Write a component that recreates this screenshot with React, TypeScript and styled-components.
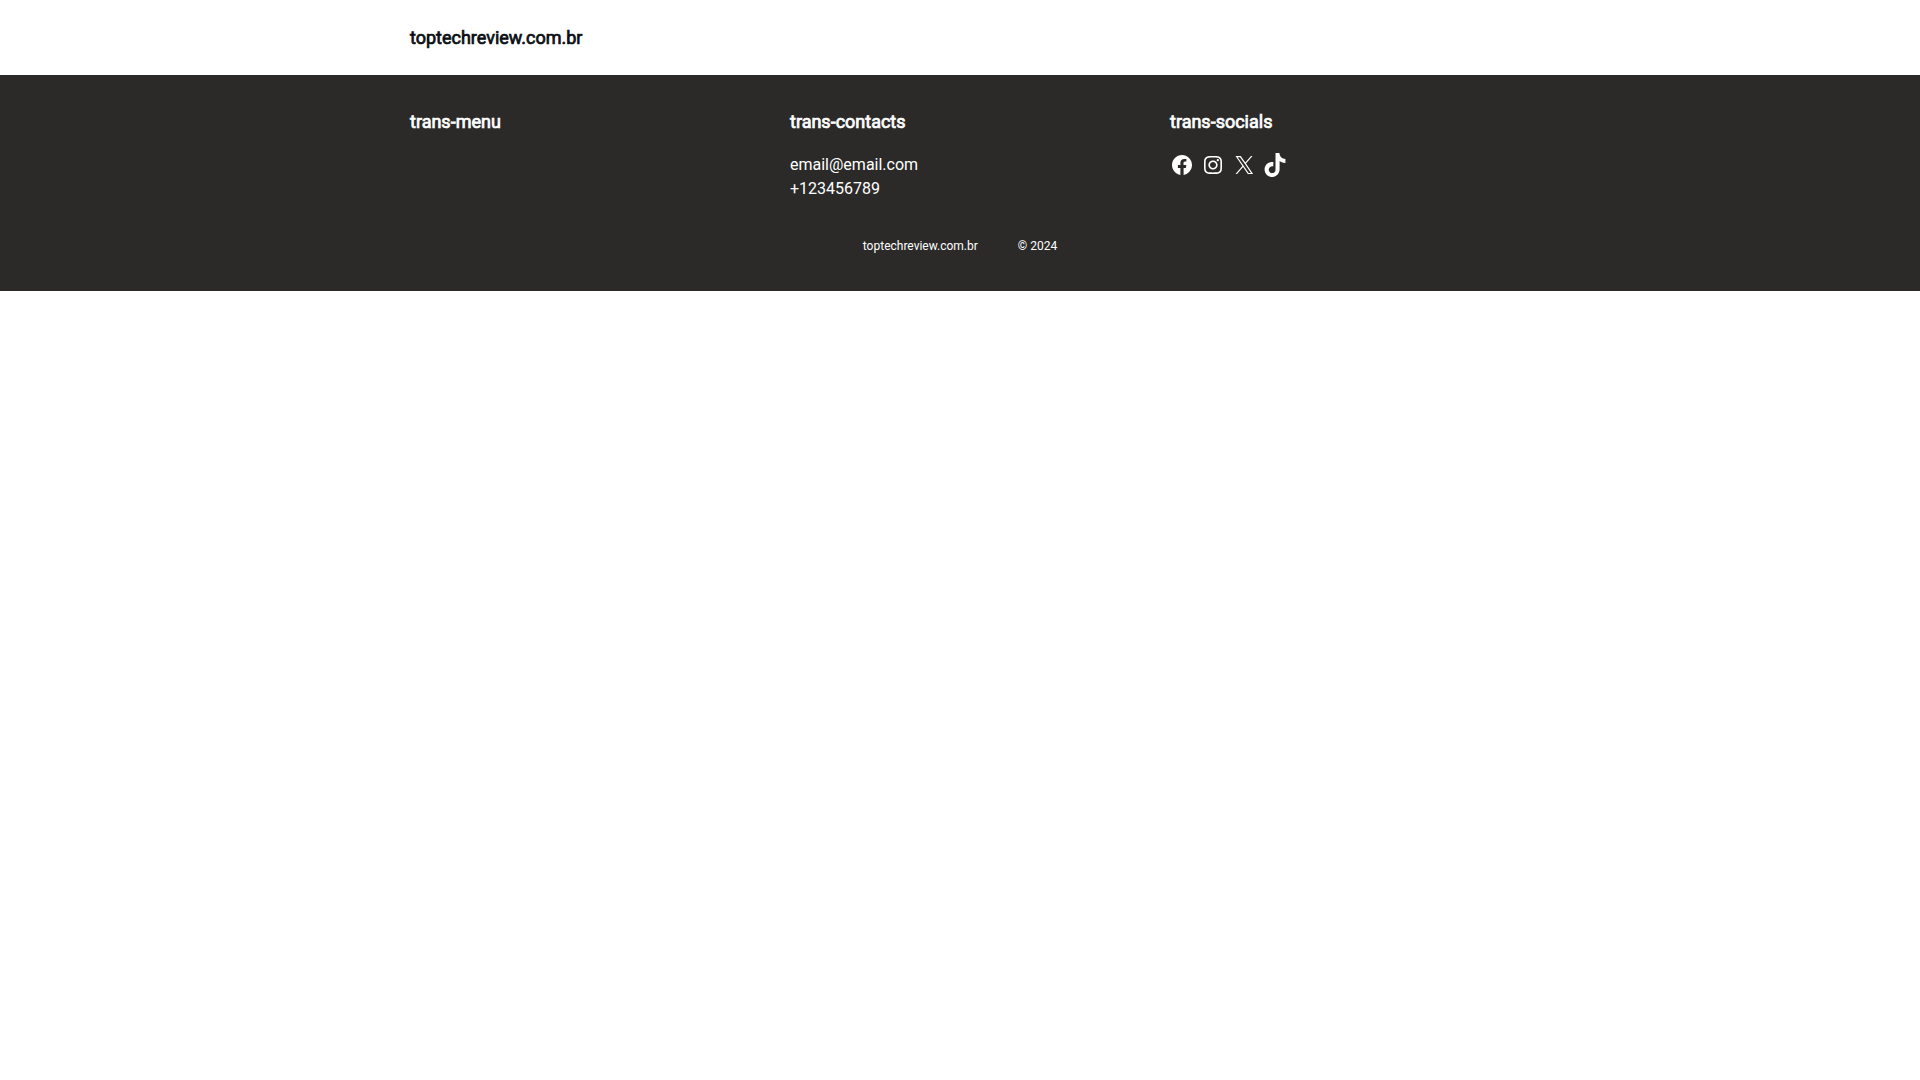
import React from "react";
import styled, { createGlobalStyle, css } from "styled-components";

const GlobalStyle = createGlobalStyle`
  *, *::before, *::after { box-sizing: border-box; }
  body { margin: 0; background: #fff; color: #0b0f14; font-family: Roboto, sans-serif; font-size: 16px; line-height: 24px; }
`;

const heading = css`
  font-size: 18px;
  font-weight: 400;
  -webkit-text-stroke: 0.04em currentColor;
`;

const Container = styled.div`
  max-width: 1140px;
  margin: 0 auto;
  padding: 0 20px;
`;

const Header = styled.header`
  padding: 24px 0;
  background: #fff;
`;

const Logo = styled.a`
  ${heading}
  display: block;
  width: fit-content;
  color: #0b0f14;
  line-height: 27px;
  text-decoration: none;
`;

const Footer = styled.footer`
  padding: 32px 0 36px;
  background: #2b2a29;
  color: #fff;
`;

const Columns = styled.div`
  display: grid;
  grid-template-columns: repeat(3, 1fr);
  gap: 40px;
`;

const Title = styled.h2`
  ${heading}
  margin: 0 0 16px;
  line-height: 30px;
`;

const ContactLink = styled.a`
  display: block;
  width: fit-content;
  color: inherit;
  text-decoration: none;
`;

const Socials = styled.div`
  display: flex;
  gap: 7px;
`;

const SocialLink = styled.a`
  display: block;
  width: 24px;
  height: 24px;
  color: inherit;

  svg { display: block; fill: currentColor; }
`;

const Legal = styled.div`
  display: flex;
  justify-content: center;
  gap: 40px;
  margin-top: 36px;
  font-size: 12px;
  line-height: 18px;
`;

const socials = [
  {
    name: "Facebook",
    viewBox: "0 0 24 24",
    path: "M12 2C6.5 2 2 6.5 2 12c0 5 3.7 9.1 8.4 9.9v-7H7.9V12h2.5V9.8c0-2.5 1.5-3.9 3.8-3.9 1.1 0 2.2.2 2.2.2v2.5h-1.3c-1.2 0-1.6.8-1.6 1.6V12h2.8l-.4 2.9h-2.3v7C18.3 21.1 22 17 22 12c0-5.5-4.5-10-10-10z",
  },
  {
    name: "Instagram",
    viewBox: "0 0 24 24",
    path: "M12,4.622c2.403,0,2.688,0.009,3.637,0.052c0.877,0.04,1.354,0.187,1.671,0.31c0.42,0.163,0.72,0.358,1.035,0.673 c0.315,0.315,0.51,0.615,0.673,1.035c0.123,0.317,0.27,0.794,0.31,1.671c0.043,0.949,0.052,1.234,0.052,3.637 s-0.009,2.688-0.052,3.637c-0.04,0.877-0.187,1.354-0.31,1.671c-0.163,0.42-0.358,0.72-0.673,1.035 c-0.315,0.315-0.615,0.51-1.035,0.673c-0.317,0.123-0.794,0.27-1.671,0.31c-0.949,0.043-1.233,0.052-3.637,0.052 s-2.688-0.009-3.637-0.052c-0.877-0.04-1.354-0.187-1.671-0.31c-0.42-0.163-0.72-0.358-1.035-0.673 c-0.315-0.315-0.51-0.615-0.673-1.035c-0.123-0.317-0.27-0.794-0.31-1.671C4.631,14.688,4.622,14.403,4.622,12 s0.009-2.688,0.052-3.637c0.04-0.877,0.187-1.354,0.31-1.671c0.163-0.42,0.358-0.72,0.673-1.035 c0.315-0.315,0.615-0.51,1.035-0.673c0.317-0.123,0.794-0.27,1.671-0.31C9.312,4.631,9.597,4.622,12,4.622 M12,3 C9.556,3,9.249,3.01,8.289,3.054C7.331,3.098,6.677,3.25,6.105,3.472C5.513,3.702,5.011,4.01,4.511,4.511 c-0.5,0.5-0.808,1.002-1.038,1.594C3.25,6.677,3.098,7.331,3.054,8.289C3.01,9.249,3,9.556,3,12c0,2.444,0.01,2.751,0.054,3.711 c0.044,0.958,0.196,1.612,0.418,2.185c0.23,0.592,0.538,1.094,1.038,1.594c0.5,0.5,1.002,0.808,1.594,1.038 c0.572,0.222,1.227,0.375,2.185,0.418C9.249,20.99,9.556,21,12,21s2.751-0.01,3.711-0.054c0.958-0.044,1.612-0.196,2.185-0.418 c0.592-0.23,1.094-0.538,1.594-1.038c0.5-0.5,0.808-1.002,1.038-1.594c0.222-0.572,0.375-1.227,0.418-2.185 C20.99,14.751,21,14.444,21,12s-0.01-2.751-0.054-3.711c-0.044-0.958-0.196-1.612-0.418-2.185c-0.23-0.592-0.538-1.094-1.038-1.594 c-0.5-0.5-1.002-0.808-1.594-1.038c-0.572-0.222-1.227-0.375-2.185-0.418C14.751,3.01,14.444,3,12,3L12,3z M12,7.378 c-2.552,0-4.622,2.069-4.622,4.622S9.448,16.622,12,16.622s4.622-2.069,4.622-4.622S14.552,7.378,12,7.378z M12,15 c-1.657,0-3-1.343-3-3s1.343-3,3-3s3,1.343,3,3S13.657,15,12,15z M16.804,6.116c-0.596,0-1.08,0.484-1.08,1.08 s0.484,1.08,1.08,1.08c0.596,0,1.08-0.484,1.08-1.08S17.401,6.116,16.804,6.116z",
  },
  {
    name: "X",
    viewBox: "0 0 24 24",
    path: "M13.982 10.622 20.54 3h-1.554l-5.693 6.618L8.745 3H3.5l6.876 10.007L3.5 21h1.554l6.012-6.989L15.868 21h5.245l-7.131-10.378Zm-2.128 2.474-.697-.997-5.543-7.93H8l4.474 6.4.697.996 5.815 8.318h-2.387l-4.745-6.787Z",
  },
  {
    name: "TikTok",
    viewBox: "0 0 32 32",
    path: "M16.708 0.027c1.745-0.027 3.48-0.011 5.213-0.027 0.105 2.041 0.839 4.12 2.333 5.563 1.491 1.479 3.6 2.156 5.652 2.385v5.369c-1.923-0.063-3.855-0.463-5.6-1.291-0.76-0.344-1.468-0.787-2.161-1.24-0.009 3.896 0.016 7.787-0.025 11.667-0.104 1.864-0.719 3.719-1.803 5.255-1.744 2.557-4.771 4.224-7.88 4.276-1.907 0.109-3.812-0.411-5.437-1.369-2.693-1.588-4.588-4.495-4.864-7.615-0.032-0.667-0.043-1.333-0.016-1.984 0.24-2.537 1.495-4.964 3.443-6.615 2.208-1.923 5.301-2.839 8.197-2.297 0.027 1.975-0.052 3.948-0.052 5.923-1.323-0.428-2.869-0.308-4.025 0.495-0.844 0.547-1.485 1.385-1.819 2.333-0.276 0.676-0.197 1.427-0.181 2.145 0.317 2.188 2.421 4.027 4.667 3.828 1.489-0.016 2.916-0.88 3.692-2.145 0.251-0.443 0.532-0.896 0.547-1.417 0.131-2.385 0.079-4.76 0.095-7.145 0.011-5.375-0.016-10.735 0.025-16.093z",
  },
];

export default function App() {
  return (
    <>
      <GlobalStyle />
      <Header>
        <Container><Logo href="#">toptechreview.com.br</Logo></Container>
      </Header>
      <Footer>
        <Container>
          <Columns>
            <nav><Title>trans-menu</Title></nav>
            <div>
              <Title>trans-contacts</Title>
              <ContactLink href="mailto:email@email.com">email@email.com</ContactLink>
              <ContactLink href="tel:+123456789">+123456789</ContactLink>
            </div>
            <div>
              <Title>trans-socials</Title>
              <Socials>
                {socials.map((s) => (
                  <SocialLink key={s.name} href="#" aria-label={s.name}>
                    <svg viewBox={s.viewBox} width="24" height="24" aria-hidden="true"><path d={s.path} /></svg>
                  </SocialLink>
                ))}
              </Socials>
            </div>
          </Columns>
          <Legal><span>toptechreview.com.br</span><span>© 2024</span></Legal>
        </Container>
      </Footer>
    </>
  );
}
